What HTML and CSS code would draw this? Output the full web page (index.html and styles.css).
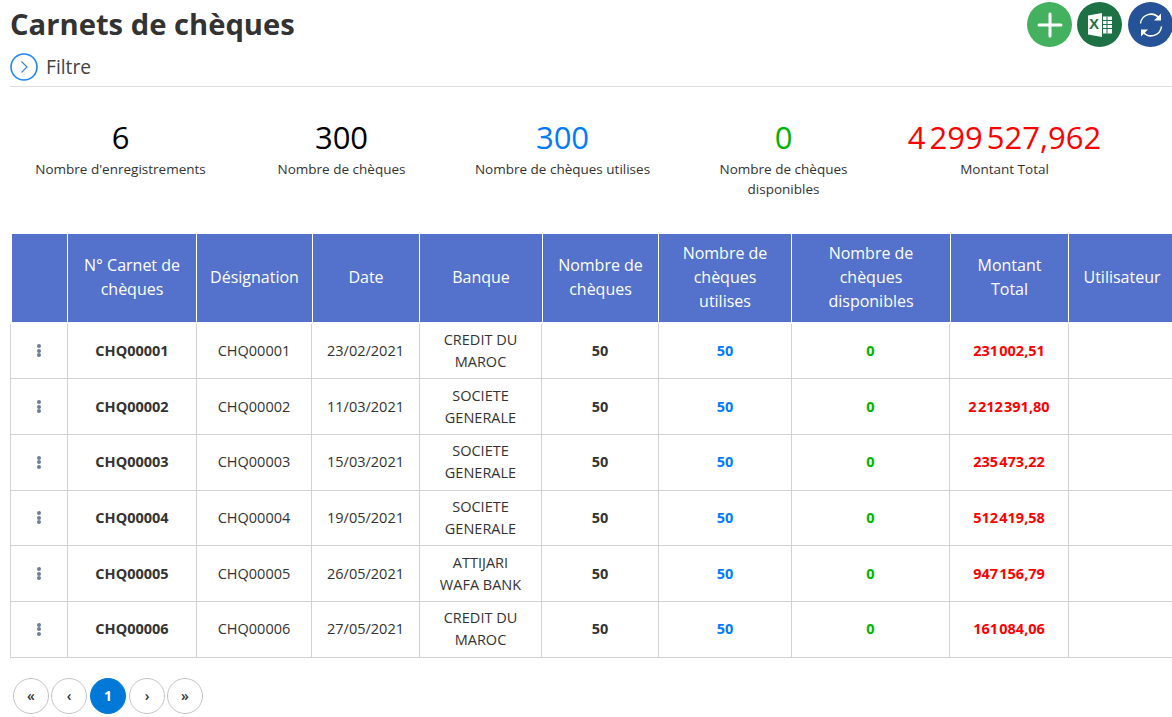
FILE: index.html
```html
<!DOCTYPE html>
<html lang="fr">
<head>
<meta charset="utf-8">
<title>Carnets de chèques</title>
<link rel="stylesheet" href="styles.css">
</head>
<body>
<main class="page">
  <header class="top">
    <div class="top-left">
      <h1 class="title">Carnets de chèques</h1>
      <div class="filter">
        <svg class="filter-icon" width="28" height="28" viewBox="0 0 28 28"><circle cx="14" cy="14" r="13" fill="none" stroke="#1e88f0" stroke-width="1.6"/><path d="M11.5 8.500 17 14l-5.500 5.500" fill="none" stroke="#3b82c4" stroke-width="1.100"/></svg>
        <span>Filtre</span>
      </div>
    </div>
    <div class="actions">
      <button class="round green"><svg width="26" height="26" viewBox="0 0 26 26"><path d="M13 2v22M2 13h22" stroke="#fff" stroke-width="3" stroke-linecap="round"/></svg></button>
      <button class="round excel"><svg width="26" height="26" viewBox="0 0 26 26"><path d="M1 3.500 15 1v24L1 22.500z" fill="#fff"/><path d="M16 4.500h9v17h-9z" fill="#fff"/><path d="M16 8.500h9M16 12.500h9M16 16.500h9M20 4.500v17" stroke="#1e7145" stroke-width="1"/></svg><span class="x">X</span></button>
      <button class="round blue"><svg width="28" height="28" viewBox="0 0 28 28"><path d="M3.500 12.500A10.500 10.500 0 0 1 22 7" fill="none" stroke="#fff" stroke-width="1.500"/><path d="M24.500 15.500A10.500 10.500 0 0 1 6 21" fill="none" stroke="#fff" stroke-width="1.500"/><path d="M24 2.500v7h-7z" fill="#fff"/><path d="M4 25.500v-7h7z" fill="#fff"/></svg></button>
    </div>
  </header>

  <section class="stats">
    <div class="stat"><div class="num">6</div><div class="lbl">Nombre d'enregistrements</div></div>
    <div class="stat"><div class="num">300</div><div class="lbl">Nombre de chèques</div></div>
    <div class="stat"><div class="num c-blue">300</div><div class="lbl">Nombre de chèques utilises</div></div>
    <div class="stat"><div class="num c-green">0</div><div class="lbl">Nombre de chèques<br>disponibles</div></div>
    <div class="stat"><div class="num c-red">4 299 527,962</div><div class="lbl">Montant Total</div></div>
  </section>

  <section class="table">
    <div class="head">
      <div class="th"></div>
      <div class="th">N° Carnet de chèques</div>
      <div class="th">Désignation</div>
      <div class="th">Date</div>
      <div class="th">Banque</div>
      <div class="th">Nombre de chèques</div>
      <div class="th">Nombre de chèques utilises</div>
      <div class="th">Nombre de chèques disponibles</div>
      <div class="th">Montant Total</div>
      <div class="th">Utilisateur</div>
    </div>
    <div class="body">
      <div class="row">
        <div class="td"><span class="dots"><i></i><i></i><i></i></span></div><div class="td b">CHQ00001</div><div class="td">CHQ00001</div><div class="td">23/02/2021</div><div class="td bank">CREDIT DU MAROC</div><div class="td b">50</div><div class="td b c-blue">50</div><div class="td b c-green">0</div><div class="td b c-red">231 002,51</div><div class="td"></div>
      </div>
      <div class="row">
        <div class="td"><span class="dots"><i></i><i></i><i></i></span></div><div class="td b">CHQ00002</div><div class="td">CHQ00002</div><div class="td">11/03/2021</div><div class="td bank">SOCIETE GENERALE</div><div class="td b">50</div><div class="td b c-blue">50</div><div class="td b c-green">0</div><div class="td b c-red">2 212 391,80</div><div class="td"></div>
      </div>
      <div class="row">
        <div class="td"><span class="dots"><i></i><i></i><i></i></span></div><div class="td b">CHQ00003</div><div class="td">CHQ00003</div><div class="td">15/03/2021</div><div class="td bank">SOCIETE GENERALE</div><div class="td b">50</div><div class="td b c-blue">50</div><div class="td b c-green">0</div><div class="td b c-red">235 473,22</div><div class="td"></div>
      </div>
      <div class="row">
        <div class="td"><span class="dots"><i></i><i></i><i></i></span></div><div class="td b">CHQ00004</div><div class="td">CHQ00004</div><div class="td">19/05/2021</div><div class="td bank">SOCIETE GENERALE</div><div class="td b">50</div><div class="td b c-blue">50</div><div class="td b c-green">0</div><div class="td b c-red">512 419,58</div><div class="td"></div>
      </div>
      <div class="row">
        <div class="td"><span class="dots"><i></i><i></i><i></i></span></div><div class="td b">CHQ00005</div><div class="td">CHQ00005</div><div class="td">26/05/2021</div><div class="td bank">ATTIJARI WAFA BANK</div><div class="td b">50</div><div class="td b c-blue">50</div><div class="td b c-green">0</div><div class="td b c-red">947 156,79</div><div class="td"></div>
      </div>
      <div class="row">
        <div class="td"><span class="dots"><i></i><i></i><i></i></span></div><div class="td b">CHQ00006</div><div class="td">CHQ00006</div><div class="td">27/05/2021</div><div class="td bank">CREDIT DU MAROC</div><div class="td b">50</div><div class="td b c-blue">50</div><div class="td b c-green">0</div><div class="td b c-red">161 084,06</div><div class="td"></div>
      </div>
    </div>
  </section>

  <nav class="pager">
    <button class="pg">«</button>
    <button class="pg">‹</button>
    <button class="pg on">1</button>
    <button class="pg">›</button>
    <button class="pg">»</button>
  </nav>
</main>
</body>
</html>
```
FILE: styles.css
```css
* { box-sizing: border-box; }
html, body { margin: 0; height: 100%; overflow: hidden; background: #fff; }
body { font-family: "Open Sans", sans-serif; font-size: 14px; line-height: 22px; color: #333; }
.page { width: 1173px; padding: 1px 0 0 10px; }

.top { display: flex; justify-content: space-between; height: 86px; border-bottom: 1px solid #e0dde0; }
.title { margin: 2px 0 0; font-size: 29.2px; line-height: 42px; font-weight: 700; color: #333; }
.filter { display: flex; align-items: center; gap: 8px; margin-top: 8px; font-size: 19.2px; line-height: 28px; color: #444; }
.filter-icon { display: block; }
.actions { display: flex; gap: 5px; padding-top: 1px; }
.round { position: relative; width: 45px; height: 45px; border: 0; border-radius: 50%; padding: 0; display: flex; align-items: center; justify-content: center; }
.green { background: #43b15e; }
.excel { background: #1e7145; }
.blue { background: #265397; margin-left: 1px; }
.x { position: absolute; left: 12px; top: 11px; font-size: 15px; line-height: 22px; font-weight: 700; color: #1e7145; }

.stats { display: grid; grid-template-columns: repeat(5, 221px); height: 147px; padding-top: 31px; text-align: center; }
.num { font-size: 31px; line-height: 38px; color: #000; }
.num.c-red { word-spacing: -4px; }
.lbl { font-size: 13.5px; line-height: 20px; margin-top: 3px; }
.c-blue { color: #007bff; }
.c-green { color: #00b300; }
.c-red { color: #f00; }

.table { width: 1166px; }
.head { display: grid; grid-template-columns: 58px 129px 116px 107px 123px 116px 133px 159px 118px 106px; height: 88px; margin-bottom: 1.6px; }
.th { display: flex; align-items: center; justify-content: center; text-align: center; padding: 0 12px 2px; margin-right: 1px; background: #5472cb; color: #fff; font-size: 16px; line-height: 24px; }
.th:first-child { margin-left: 2px; }
.th:last-child { margin-right: 0; }
.row { display: grid; grid-template-columns: 57px 129px 115px 108px 122px 117px 133px 158px 119px 106px; height: 55.67px; border-bottom: 1px solid #d2d2d2; }
.td { display: flex; align-items: center; justify-content: center; text-align: center; padding: 0 12px; border-left: 1px solid #d2d2d2; font-size: 14.5px; line-height: 22px; }
.td.c-red { word-spacing: -2.5px; }
.bank { padding: 0 14px; }
.b { font-weight: 700; }
.dots { display: flex; flex-direction: column; gap: 0.5px; }
.dots i { width: 4px; height: 4px; border-radius: 50%; background: #6b7f99; }

.pager { display: flex; gap: 2px; margin: 20px 0 0 3px; }
.pg { width: 36px; height: 36px; padding: 0; border: 1px solid #c4c4c4; border-radius: 50%; background: #fff; color: #333; font-family: "Open Sans", sans-serif; font-size: 14px; line-height: 1; font-weight: 600; }
.pg:nth-child(3) { margin-left: 1px; }
.pg:nth-child(4) { margin-left: 1px; }
.pg.on { background: #0078d7; border-color: #0078d7; color: #fff; font-weight: 700; }
```
